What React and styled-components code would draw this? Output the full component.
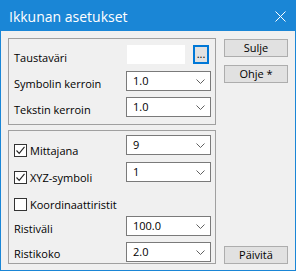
import React from 'react'
import styled, { createGlobalStyle } from 'styled-components'

const GlobalStyle = createGlobalStyle`
    body {
        margin: 0;
        overflow: hidden;
        font-family: "Open Sans", "Noto Sans", sans-serif;
    }
`

const Window = styled.div`
    width: 296px;
    height: 271px;
    box-sizing: border-box;
    border: 1px solid #1a86d6;
    display: flex;
    flex-direction: column;
    background: #f0f0f0;
`

const TitleBar = styled.div`
    height: 30px;
    flex-shrink: 0;
    background: #1a86d6;
    color: #fff;
    display: flex;
    align-items: center;
    justify-content: space-between;
    padding: 0 8px 0 8px;
    font-size: 14px;
`

const Close = styled.svg`
    width: 11px;
    height: 11px;
    margin-right: 1px;
    margin-top: 1px;
`

const Body = styled.div`
    flex: 1;
    display: flex;
    padding: 7px 7px 6px 7px;
    font-size: 11px;
    color: #000;
`

const LeftCol = styled.div`
    width: 208px;
    display: flex;
    flex-direction: column;
    gap: 5px;
`

const RightCol = styled.div`
    width: 64px;
    margin-left: 8px;
    padding-top: 1px;
    display: flex;
    flex-direction: column;
    gap: 8px;
`

const Group = styled.div`
    box-sizing: border-box;
    height: ${p => p.$h}px;
    border: 1px solid #a0a0a0;
    padding: ${p => p.$pt}px 4px 0 4px;
    display: flex;
    flex-direction: column;
`

const Row = styled.div`
    display: flex;
    align-items: center;
    height: ${p => p.$h || 20}px;
    margin-top: ${p => p.$mt || 0}px;
`

const Label = styled.div`
    flex: 1;
    padding-left: 1px;
    padding-top: ${p => p.$drop || 4}px;
    white-space: nowrap;
`

const Select = styled.div`
    width: 85px;
    height: 100%;
    box-sizing: border-box;
    background: #fff;
    border: 1px solid #7a7a7a;
    display: flex;
    align-items: center;
    justify-content: space-between;
    padding: 0 5px 2px 6px;
`

const Chevron = styled.svg`
    width: 9px;
    height: 6px;
    margin-top: 3px;
`

const ColorPick = styled.div`
    width: 85px;
    height: 100%;
    display: flex;
    align-items: stretch;
`

const Swatch = styled.div`
    width: 58px;
    margin-left: 1px;
    background: #fff;
`

const DotsButton = styled.div`
    width: 16px;
    margin-left: 8px;
    box-sizing: border-box;
    border: 2px solid #0078d7;
    background: #e1e1e1;
    display: flex;
    align-items: flex-end;
    justify-content: center;
    font-size: 11px;
    line-height: 1;
    padding-bottom: 3px;
`

const CheckLabel = styled.label`
    flex: 1;
    display: flex;
    align-items: center;
    gap: 3px;
    padding-left: 1px;
    padding-top: 10px;
    white-space: nowrap;
`

const Box = styled.span`
    width: 13px;
    height: 13px;
    box-sizing: border-box;
    border: 1px solid #333;
    background: #fff;
    display: flex;
    align-items: center;
    justify-content: center;
`

const Button = styled.div`
    height: 18px;
    box-sizing: border-box;
    border: 1px solid #adadad;
    background: #e1e1e1;
    display: flex;
    align-items: center;
    justify-content: center;
    padding-bottom: 1px;
    margin-top: ${p => (p.$bottom ? 'auto' : '0')};
`

function Combo({ value }) {
  return (
    <Select>
        <span>{value}</span>
        <Chevron viewBox="0 0 9 6">
            <path d="M0.5 0.5 L4.5 4.5 L8.5 0.5" fill="none" stroke="#606060" strokeWidth="1" />
        </Chevron>
    </Select>
  )
}

function Check({ checked, children }) {
  return (
    <CheckLabel>
        <Box>
            {checked && (
              <svg width="11" height="11" viewBox="0 0 11 11">
                  <path d="M1.5 5.5 L4.2 8.3 L9.5 1.8" fill="none" stroke="#222" strokeWidth="1.1" />
              </svg>
            )}
        </Box>
        {children}
    </CheckLabel>
  )
}

function App() {
  return (
    <>
    <GlobalStyle />
    <Window>
        <TitleBar>
            <span>Ikkunan asetukset</span>
            <Close viewBox="0 0 11 11">
                <path d="M0.5 0.5 L10.5 10.5 M10.5 0.5 L0.5 10.5" stroke="#fff" strokeWidth="1" />
            </Close>
        </TitleBar>
        <Body>
            <LeftCol>
                <Group $h={87} $pt={6}>
                    <Row $h={19}>
                        <Label $drop={6}>Taustaväri</Label>
                        <ColorPick>
                            <Swatch />
                            <DotsButton>...</DotsButton>
                        </ColorPick>
                    </Row>
                    <Row $mt={7}>
                        <Label>Symbolin kerroin</Label>
                        <Combo value="1.0" />
                    </Row>
                    <Row $mt={6}>
                        <Label>Tekstin kerroin</Label>
                        <Combo value="1.0" />
                    </Row>
                </Group>
                <Group $h={134} $pt={4}>
                    <Row>
                        <Check checked>Mittajana</Check>
                        <Combo value="9" />
                    </Row>
                    <Row $mt={7}>
                        <Check checked>XYZ-symboli</Check>
                        <Combo value="1" />
                    </Row>
                    <Row $mt={7}>
                        <Check>Koordinaattiristit</Check>
                    </Row>
                    <Row $mt={7}>
                        <Label>Ristiväli</Label>
                        <Combo value="100.0" />
                    </Row>
                    <Row $mt={6}>
                        <Label $drop={2}>Ristikoko</Label>
                        <Combo value="2.0" />
                    </Row>
                </Group>
            </LeftCol>
            <RightCol>
                <Button>Sulje</Button>
                <Button>Ohje *</Button>
                <Button $bottom>Päivitä</Button>
            </RightCol>
        </Body>
    </Window>
    </>
  )
}

export default App
